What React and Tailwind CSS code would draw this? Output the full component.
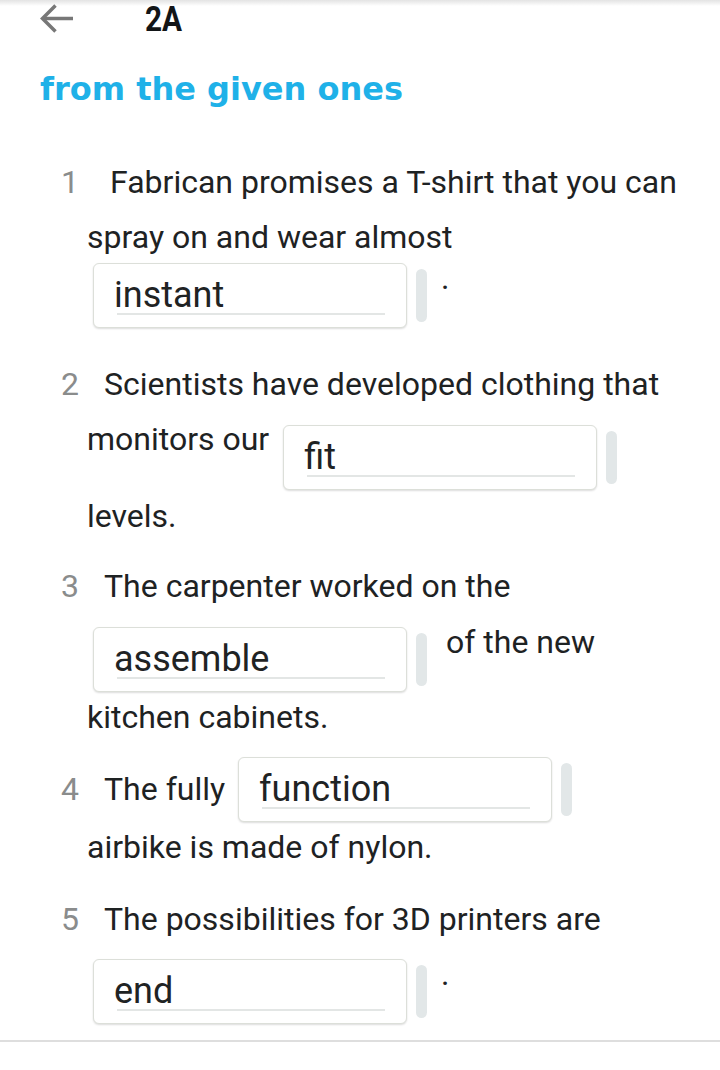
import React from "react";

const Blank = ({ word }) => (
  <div className="flex items-start shrink-0">
    <div className="w-[314px] h-[65px] rounded-[6px] border border-[#dcdfd9] bg-white shadow-[0_1px_2px_rgba(0,0,0,0.14)] pt-[11px]">
      <div className="ml-[20px] h-[41px] text-[36px] leading-[41px] text-[#1f2324]">{word}</div>
      <div className="ml-[23px] -mt-[3px] w-[268px] h-[2px] bg-[#e3e6e5]" />
    </div>
    <div className="ml-[9px] mt-[6px] w-[11px] h-[53px] rounded-full bg-[#e2e7e8]" />
  </div>
);

const Line = ({ children, className = "" }) => (
  <div className={`h-[55px] leading-[55px] whitespace-nowrap ${className}`}>{children}</div>
);

const Num = ({ n }) => (
  <span className="ml-[61px] w-[17px] shrink-0 text-[#8a8c8c]">{n}</span>
);

const Dot = () => <span className="ml-[14px] -mt-[12px] leading-[55px]">.</span>;

export default function App() {
  return (
    <div className="w-[720px] min-h-[1070px] bg-white text-[32px] text-[#1e2223] font-['Roboto',sans-serif]">
      {/* header */}
      <div className="h-[40px] flex items-start bg-[linear-gradient(to_bottom,#e3e3e3_0px,#ffffff_6px)]">
        <svg className="ml-[39px] mt-[3px]" width="35" height="31" viewBox="0 0 35 31" fill="none">
          <path d="M4 15.5H34" stroke="#777777" strokeWidth="3.5" />
          <path d="M16.5 2.5L3.5 15.5L16.5 28.5" stroke="#777777" strokeWidth="3.5" />
        </svg>
        <span className="ml-[71px] inline-block origin-left scale-x-[0.85] text-[35px] leading-[40px] font-bold text-[#121517]">
          2A
        </span>
      </div>

      {/* title */}
      <div className="mt-[29px] pl-[40px] h-[40px] text-[32px] leading-[40px] font-bold text-[#1fb1e8] font-['DejaVu_Sans',sans-serif]">
        from the given ones
      </div>

      {/* 1 */}
      <div className="mt-[46px]">
        <Line className="flex">
          <Num n="1" />
          <span className="ml-[32px]">Fabrican promises a T-shirt that you can</span>
        </Line>
        <Line className="pl-[87px]">spray on and wear almost</Line>
        <div className="flex items-start pl-[93px] -mt-[2px]">
          <Blank word="instant" />
          <Dot />
        </div>
      </div>

      {/* 2 */}
      <div className="mt-[29px]">
        <Line className="flex">
          <Num n="2" />
          <span className="ml-[26px]">Scientists have developed clothing that</span>
        </Line>
        <div className="flex items-start pl-[87px]">
          <span className="leading-[55px] whitespace-nowrap">monitors our</span>
          <div className="ml-[14px] mt-[13px]">
            <Blank word="fit" />
          </div>
        </div>
        <Line className="pl-[87px] -mt-[1px]">levels.</Line>
      </div>

      {/* 3 */}
      <div className="mt-[15px]">
        <Line className="flex">
          <Num n="3" />
          <span className="ml-[26px]">The carpenter worked on the</span>
        </Line>
        <div className="flex items-start pl-[93px]">
          <div className="mt-[13px]">
            <Blank word="assemble" />
          </div>
          <span className="ml-[19px] mt-[1px] leading-[55px] whitespace-nowrap">of the new</span>
        </div>
        <Line className="pl-[87px] -mt-[2px]">kitchen cabinets.</Line>
      </div>

      {/* 4 */}
      <div className="mt-[12px]">
        <div className="flex items-start">
          <div className="flex mt-[5px] h-[55px] leading-[55px] whitespace-nowrap">
            <Num n="4" />
            <span className="ml-[26px]">The fully</span>
          </div>
          <div className="ml-[13px]">
            <Blank word="function" />
          </div>
        </div>
        <Line className="pl-[87px] -mt-[2px]">airbike is made of nylon.</Line>
      </div>

      {/* 5 */}
      <div className="mt-[17px]">
        <Line className="flex">
          <Num n="5" />
          <span className="ml-[26px]">The possibilities for 3D printers are</span>
        </Line>
        <div className="flex items-start pl-[93px] mt-[12px]">
          <Blank word="end" />
          <Dot />
        </div>
      </div>

      <div className="mt-[16px] h-[2px] bg-[#dedede]" />
    </div>
  );
}
